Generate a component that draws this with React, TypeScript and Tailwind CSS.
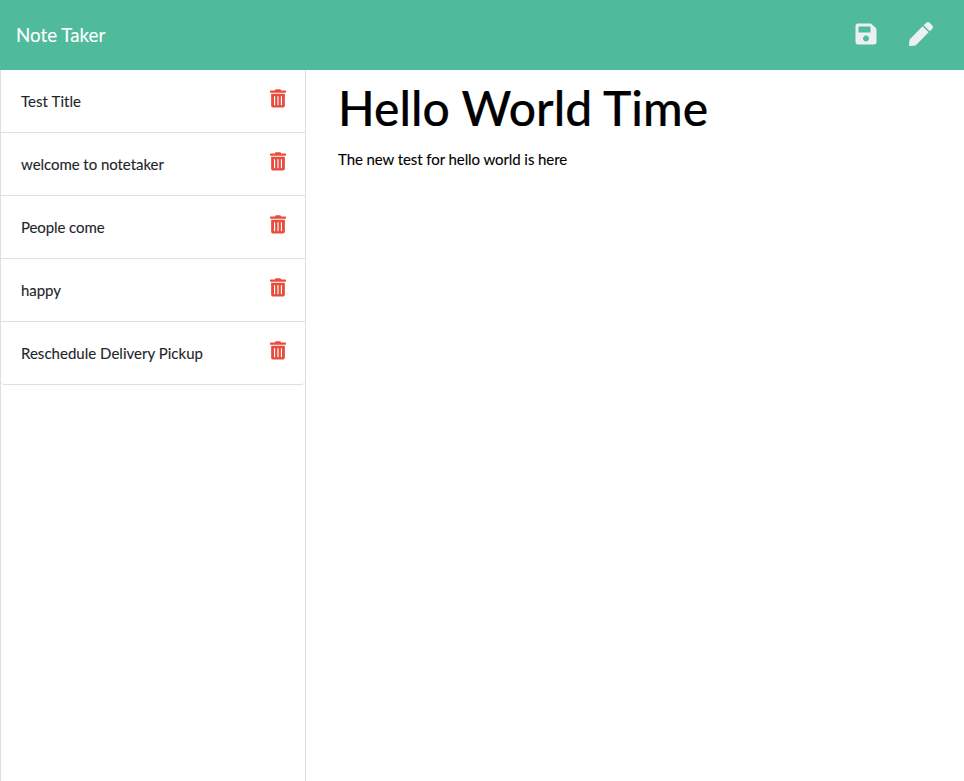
import React from 'react';
import { FaPen, FaSave, FaTrashAlt } from 'react-icons/fa';

interface Note {
  title: string;
  tracking: string;
}

const notes: Note[] = [
  { title: 'Test Title', tracking: 'tracking-[0.06px]' },
  { title: 'welcome to notetaker', tracking: 'tracking-[-0.05px]' },
  { title: 'People come', tracking: 'tracking-[-0.09px]' },
  { title: 'happy', tracking: 'tracking-[-0.06px]' },
  { title: 'Reschedule Delivery Pickup', tracking: 'tracking-[0.02px]' },
];

export default function App() {
  return (
    <div className="flex h-screen flex-col overflow-hidden bg-white font-['Lato',sans-serif] text-[15px] leading-[22.5px] text-[#212529] [-webkit-text-stroke:0.1px_currentColor]">
      <nav className="flex h-[70px] shrink-0 items-center justify-between bg-[#50ba9d] pr-[31px] pl-4 text-white">
        <span className="text-[18.75px] leading-7">Note Taker</span>
        <div className="flex items-center gap-[31.5px] pb-[2px] text-[#ecf0f1]">
          <FaSave size={24} />
          <FaPen size={24} />
        </div>
      </nav>
      <div className="flex min-h-0 flex-1">
        <aside className="w-[306px] shrink-0 border-x border-[#dfdfdf]">
          <ul className="overflow-hidden rounded-b border-b border-[#dfdfdf]">
            {notes.map(({ title, tracking }) => (
              <li key={title} className="flex h-[63px] items-start justify-between border-b border-[#dfdfdf] px-5 pt-5 last:h-[62px] last:border-b-0">
                <span className={tracking}>{title}</span>
                <FaTrashAlt className="-mt-px -mr-px h-[18.75px] w-4 shrink-0 text-[#e74c3c]" />
              </li>
            ))}
          </ul>
        </aside>
        <main className="pt-[9px] pl-8 text-black">
          <h1 className="text-[48px] leading-[58px] font-medium tracking-[0.04px] [-webkit-text-stroke:0.2px_currentColor]">Hello World Time</h1>
          <p className="mt-[11px] tracking-[-0.08px]">The new test for hello world is here</p>
        </main>
      </div>
    </div>
  );
}
